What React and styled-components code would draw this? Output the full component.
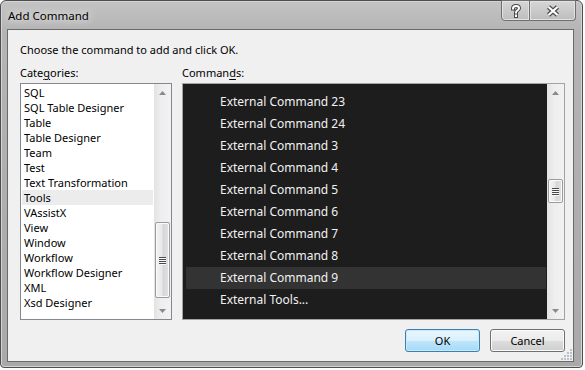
import React from 'react'
import styled, { createGlobalStyle } from 'styled-components'

const categories = [
    'SQL', 'SQL Table Designer', 'Table', 'Table Designer', 'Team', 'Test',
    'Text Transformation', 'Tools', 'VAssistX', 'View', 'Window', 'Workflow',
    'Workflow Designer', 'XML', 'Xsd Designer',
]

const commands = [
    'External Command 23', 'External Command 24', 'External Command 3',
    'External Command 4', 'External Command 5', 'External Command 6',
    'External Command 7', 'External Command 8', 'External Command 9',
    'External Tools...',
]

function Arrow({ down }) {
    return (
        <svg width="7" height="4" viewBox="0 0 7 4">
            <path d={down ? 'M0 0H7L3.5 4Z' : 'M0 4H7L3.5 0Z'} fill="#8a8a8a" />
        </svg>
    )
}

function Scrollbar({ thumbTop, thumbHeight }) {
    return (
        <ScrollTrack>
            <ArrowBox><Arrow /></ArrowBox>
            <ThumbArea>
                <Thumb style={{ marginTop: thumbTop, height: thumbHeight }}>
                    <Grip><span /><span /><span /><span /></Grip>
                </Thumb>
            </ThumbArea>
            <ArrowBox><Arrow down /></ArrowBox>
        </ScrollTrack>
    )
}

function HelpGlyph() {
    return (
        <svg width="12" height="14" viewBox="0 0 12 14">
            <g fill="none" strokeLinecap="square">
                <path d="M3 4.5C3 2.5 4.3 2 6 2S9 2.8 9 4.3C9 6.2 6 6.3 6 8.5" stroke="#4a4a4a" strokeWidth="4" />
                <path d="M6 11.5V12" stroke="#4a4a4a" strokeWidth="4" />
                <path d="M3 4.5C3 2.5 4.3 2 6 2S9 2.8 9 4.3C9 6.2 6 6.3 6 8.5" stroke="#fff" strokeWidth="2" />
                <path d="M6 11.5V12" stroke="#fff" strokeWidth="2" />
            </g>
        </svg>
    )
}

function CloseGlyph() {
    return (
        <svg width="14" height="12" viewBox="0 0 14 12">
            <g fill="none">
                <path d="M2.5 2L11.5 10M11.5 2L2.5 10" stroke="#4a4a4a" strokeWidth="4.5" />
                <path d="M2.5 2L11.5 10M11.5 2L2.5 10" stroke="#fff" strokeWidth="2.2" />
            </g>
        </svg>
    )
}

function SizeGrip() {
    const dots = [[9, 0], [6, 3], [9, 3], [3, 6], [6, 6], [9, 6], [0, 9], [3, 9], [6, 9], [9, 9]]
    return (
        <Grippy width="11" height="11" viewBox="0 0 11 11">
            {dots.map(([x, y], i) => (
                <rect key={i} x={x} y={y} width="2" height="2" fill="#b8c2cc" />
            ))}
        </Grippy>
    )
}

export default function App() {
    return (
        <>
            <GlobalStyle />
            <Window>
                <TitleBar>
                    <Title>Add Command</Title>
                    <CaptionButtons>
                        <CaptionButton $w={29} $first><HelpGlyph /></CaptionButton>
                        <CaptionButton $w={46}><CloseGlyph /></CaptionButton>
                    </CaptionButtons>
                </TitleBar>
                <Content>
                    <Instruction>Choose the command to add and click OK.</Instruction>
                    <Panes>
                        <Label>Cate<u>g</u>ories:</Label>
                        <Label>Comman<u>d</u>s:</Label>
                        <CategoryList>
                            <Items>
                                {categories.map((c) => (
                                    <CategoryItem key={c} $selected={c === 'Tools'}>{c}</CategoryItem>
                                ))}
                            </Items>
                            <Scrollbar thumbTop={121} thumbHeight={76} />
                        </CategoryList>
                        <CommandList>
                            <DarkItems>
                                {commands.map((c) => (
                                    <CommandItem key={c} $selected={c === 'External Command 9'}>{c}</CommandItem>
                                ))}
                            </DarkItems>
                            <Scrollbar thumbTop={78} thumbHeight={24} />
                        </CommandList>
                    </Panes>
                    <Buttons>
                        <Button $default>OK</Button>
                        <Button>Cancel</Button>
                    </Buttons>
                    <SizeGrip />
                </Content>
            </Window>
        </>
    )
}

const GlobalStyle = createGlobalStyle`
    html, body {
        margin: 0;
        background: #ffffff;
    }
    body {
        font-family: "Noto Sans", "Open Sans", sans-serif;
        font-size: 11px;
        color: #000;
    }
`

const Window = styled.div`
    box-sizing: border-box;
    width: 583px;
    height: 368px;
    border: 1px solid #4e4e4e;
    border-radius: 6px 6px 4px 4px;
    background: linear-gradient(to bottom, #c3c3c3 0px, #b4b4b4 30px, #a9a9a9 100%);
    box-shadow: inset 0 0 0 1px #d4d4d4;
    padding: 0 8px 5px 6px;
    display: flex;
    flex-direction: column;
`

const TitleBar = styled.div`
    height: 28px;
    display: flex;
    justify-content: space-between;
    align-items: flex-start;
`

const Title = styled.div`
    padding: 7px 0 0 1px;
    font-size: 11.5px;
    line-height: 15px;
    color: #000;
    text-shadow: 0 0 10px #ececec, 0 0 6px #e4e4e4;
`

const CaptionButtons = styled.div`
    display: flex;
    margin: -1px -2px 0 0;
`

const CaptionButton = styled.div`
    box-sizing: border-box;
    width: ${(p) => p.$w}px;
    height: 21px;
    display: flex;
    align-items: center;
    justify-content: center;
    border: 1px solid #6f6f6f;
    border-left: ${(p) => (p.$first ? '1px solid #6f6f6f' : 'none')};
    border-radius: ${(p) => (p.$first ? '0 0 0 4px' : '0 0 4px 0')};
    background: linear-gradient(to bottom, #d6d6d6, #bdbdbd);
    box-shadow: inset 0 0 0 1px #e2e2e2;
`

const Content = styled.div`
    position: relative;
    flex: 1;
    background: #f0f0f0;
    border: 1px solid #6a6a6a;
    padding: 12px 8px 0 12px;
    display: flex;
    flex-direction: column;
`

const Instruction = styled.div`
    line-height: 15px;
`

const Panes = styled.div`
    display: grid;
    grid-template-columns: 152px 383px;
    grid-template-rows: 15px 237px;
    column-gap: 10px;
    row-gap: 3px;
    margin-top: 8px;
`

const Label = styled.div`
    line-height: 15px;
    u {
        text-decoration: underline;
        text-underline-offset: 2px;
    }
`

const CategoryList = styled.div`
    box-sizing: border-box;
    border: 1px solid #828790;
    background: #fff;
    display: flex;
    overflow: hidden;
`

const Items = styled.div`
    flex: 1;
    padding: 1px 1px 0 1px;
`

const CategoryItem = styled.div`
    height: 15px;
    line-height: 15px;
    padding-left: 2px;
    white-space: nowrap;
    background: ${(p) => (p.$selected ? '#ececec' : 'transparent')};
`

const CommandList = styled.div`
    box-sizing: border-box;
    border: 1px solid #a3a3a3;
    background: #1d1d1d;
    display: flex;
    overflow: hidden;
`

const DarkItems = styled.div`
    flex: 1;
    padding: 7px 1px 0 3px;
`

const CommandItem = styled.div`
    height: 22px;
    line-height: 22px;
    padding-left: 34px;
    font-size: 12px;
    color: #f1f1f1;
    white-space: nowrap;
    background: ${(p) => (p.$selected ? '#333333' : 'transparent')};
`

const ScrollTrack = styled.div`
    width: 17px;
    display: flex;
    flex-direction: column;
    background: linear-gradient(to right, #e3e3e3, #eeeeee 40%, #f2f2f2);
`

const ArrowBox = styled.div`
    height: 17px;
    display: flex;
    align-items: center;
    justify-content: center;
`

const ThumbArea = styled.div`
    flex: 1;
    padding: 0 1px;
`

const Thumb = styled.div`
    box-sizing: border-box;
    border: 1px solid #9b9b9b;
    border-radius: 2px;
    background: linear-gradient(to right, #f4f4f4, #e8e8e8 45%, #d6d6d6 55%, #e2e2e2);
    box-shadow: inset 0 0 0 1px #fafafa;
    display: flex;
    align-items: center;
    justify-content: center;
`

const Grip = styled.div`
    display: flex;
    flex-direction: column;
    gap: 1px;
    span {
        display: block;
        width: 7px;
        height: 1px;
        background: #4a4a4a;
        box-shadow: 0 1px 0 #f8f8f8;
    }
`

const Buttons = styled.div`
    display: flex;
    justify-content: flex-end;
    gap: 10px;
    margin-top: 9px;
`

const Button = styled.div`
    box-sizing: border-box;
    width: 75px;
    height: 23px;
    display: flex;
    align-items: center;
    justify-content: center;
    border: 1px solid ${(p) => (p.$default ? '#3c7fb1' : '#707070')};
    border-radius: 3px;
    background: ${(p) =>
        p.$default
            ? 'linear-gradient(to bottom, #eaf6fd 0%, #d9f0fc 50%, #bee6fd 51%, #a7d9f5 100%)'
            : 'linear-gradient(to bottom, #f2f2f2 0%, #ebebeb 50%, #dddddd 51%, #cfcfcf 100%)'};
    box-shadow: inset 0 0 0 1px ${(p) => (p.$default ? '#c7eafb' : '#fbfbfb')};
`

const Grippy = styled.svg`
    position: absolute;
    right: 1px;
    bottom: 1px;
`
